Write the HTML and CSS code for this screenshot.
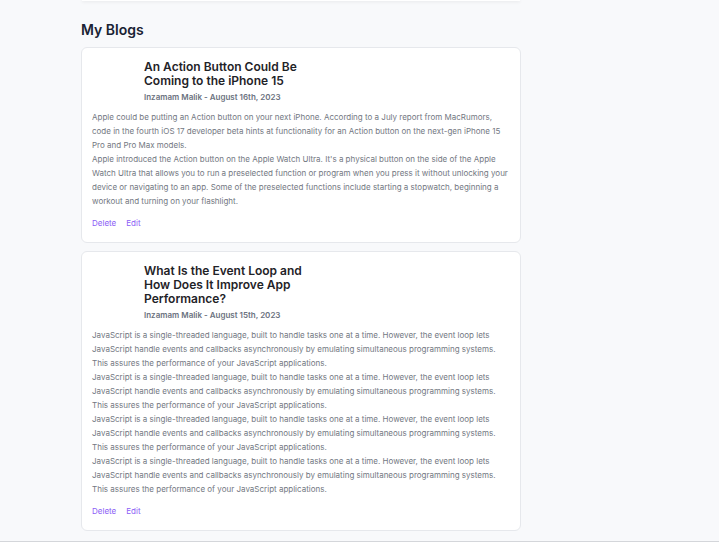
FILE: index.html
```html
<!DOCTYPE html>
<html lang="en">
<head>
<meta charset="utf-8">
<title>My Blogs</title>
<link rel="stylesheet" href="styles.css">
</head>
<body>
<div class="page">
  <main class="column">
    <div class="prev-card"></div>
    <h2 class="section-title">My Blogs</h2>
    <div class="posts">
      <article class="post">
        <div class="post-head">
          <div class="thumb"></div>
          <div class="head-text">
            <h3 class="post-title">An Action Button Could Be Coming to the iPhone 15</h3>
            <p class="meta">Inzamam Malik - August 16th, 2023</p>
          </div>
        </div>
        <div class="post-body">
          <p>Apple could be putting an Action button on your next iPhone. According to a July report from MacRumors, code in the fourth iOS 17 developer beta hints at functionality for an Action button on the next-gen iPhone 15 Pro and Pro Max models.</p>
          <p>Apple introduced the Action button on the Apple Watch Ultra. It's a physical button on the side of the Apple Watch Ultra that allows you to run a preselected function or program when you press it without unlocking your device or navigating to an app. Some of the preselected functions include starting a stopwatch, beginning a workout and turning on your flashlight.</p>
        </div>
        <div class="actions">
          <a class="action" href="#">Delete</a>
          <a class="action" href="#">Edit</a>
        </div>
      </article>
      <article class="post">
        <div class="post-head">
          <div class="thumb"></div>
          <div class="head-text">
            <h3 class="post-title">What Is the Event Loop and How Does It Improve App Performance?</h3>
            <p class="meta">Inzamam Malik - August 15th, 2023</p>
          </div>
        </div>
        <div class="post-body">
          <p>JavaScript is a single-threaded language, built to handle tasks one at a time. However, the event loop lets JavaScript handle events and callbacks asynchronously by emulating simultaneous programming systems. This assures the performance of your JavaScript applications.</p>
          <p>JavaScript is a single-threaded language, built to handle tasks one at a time. However, the event loop lets JavaScript handle events and callbacks asynchronously by emulating simultaneous programming systems. This assures the performance of your JavaScript applications.</p>
          <p>JavaScript is a single-threaded language, built to handle tasks one at a time. However, the event loop lets JavaScript handle events and callbacks asynchronously by emulating simultaneous programming systems. This assures the performance of your JavaScript applications.</p>
          <p>JavaScript is a single-threaded language, built to handle tasks one at a time. However, the event loop lets JavaScript handle events and callbacks asynchronously by emulating simultaneous programming systems. This assures the performance of your JavaScript applications.</p>
        </div>
        <div class="actions">
          <a class="action" href="#">Delete</a>
          <a class="action" href="#">Edit</a>
        </div>
      </article>
    </div>
  </main>
</div>
</body>
</html>
```

FILE: styles.css
```css
* {
  box-sizing: border-box;
}

html, body {
  margin: 0;
  padding: 0;
}

body {
  background: #f8f9fb;
  font-family: Inter, "Noto Sans", sans-serif;
}

.page {
  height: 542px;
  border-bottom: 1px solid #d4d6da;
  overflow: hidden;
}

.column {
  width: 440px;
  margin-left: 81px;
  display: flex;
  flex-direction: column;
}

.prev-card {
  height: 1px;
  margin: 0 1px;
  background: #ffffff;
  box-shadow: 0 1px 3px rgba(0, 0, 0, 0.12);
}

.section-title {
  margin: 19px 0 0;
  font-size: 14px;
  line-height: 20px;
  font-weight: 600;
  color: #1a2333;
}

.posts {
  margin-top: 7px;
  display: flex;
  flex-direction: column;
  gap: 8px;
}

.post {
  background: #ffffff;
  border: 1px solid #e6e8ec;
  border-radius: 6px;
  padding: 12px 10px 13px 10px;
}

.post-head {
  display: flex;
  gap: 4px;
}

.thumb {
  width: 48px;
  flex: none;
}

.head-text {
  width: 165px;
}

.post-title {
  margin: 0;
  font-size: 12px;
  line-height: 14px;
  font-weight: 600;
  color: #1f2328;
}

.meta {
  margin: 3px 0 0;
  font-size: 8px;
  line-height: 12px;
  font-weight: 600;
  color: #6b7280;
}

.post-body {
  margin-top: 7px;
}

.post-body p {
  margin: 0;
  font-size: 8px;
  line-height: 14px;
  color: #737882;
}

.actions {
  margin-top: 9px;
  display: flex;
  gap: 10px;
}

.action {
  font-size: 8px;
  line-height: 12px;
  color: #8b5cf6;
  text-decoration: none;
}
```
